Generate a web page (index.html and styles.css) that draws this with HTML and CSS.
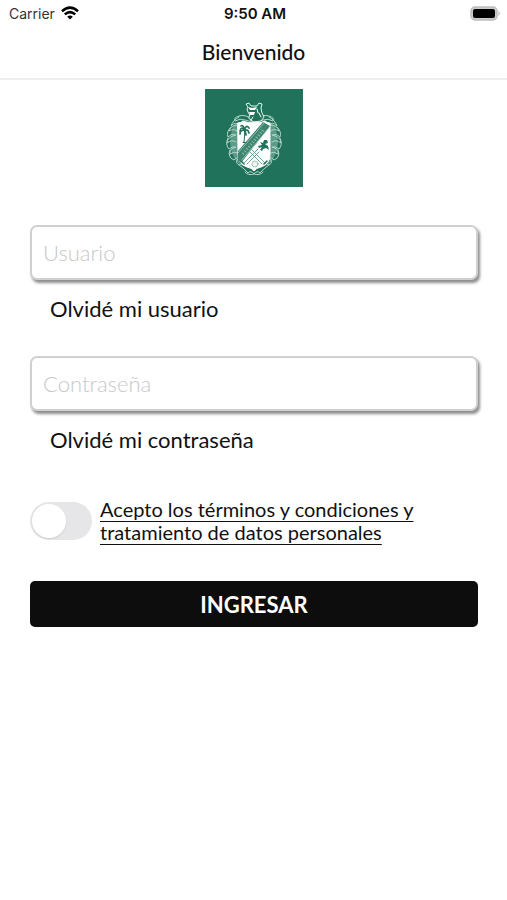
FILE: index.html
```html
<!DOCTYPE html>
<html lang="es">
<head>
    <meta charset="UTF-8">
    <meta name="viewport" content="width=device-width, initial-scale=1.0">
    <title>Bienvenido</title>
    <link rel="stylesheet" href="styles.css">
</head>
<body>
    <div class="status-bar">
        <div class="status-carrier">
            <span>Carrier</span>
            <svg width="18" height="14" viewBox="0 0 18 14" fill="none" stroke="#000" stroke-width="2.6">
                <path d="M1 5.2Q9-2 17 5.2"/>
                <path d="M3.8 8.4Q9 3.8 14.2 8.4"/>
                <path d="M6.2 10.7Q9 8.3 11.8 10.7L9 13.6Z" fill="#000" stroke="none"/>
            </svg>
        </div>
        <div class="status-time">9:50 AM</div>
        <div class="status-battery">
            <svg width="31" height="15" viewBox="0 0 31 15">
                <rect x="1" y="1" width="26" height="13" rx="4" fill="#ccc" stroke="#bdbdbd" stroke-width="1.5"/>
                <rect x="3" y="3" width="22" height="9" rx="2" fill="#000"/>
                <path d="M28.5 5Q31 7.5 28.5 10Z" fill="#b0b0b0"/>
            </svg>
        </div>
    </div>

    <header>
        <h1>Bienvenido</h1>
    </header>

    <main>
        <svg class="logo" width="98" height="98" viewBox="0 0 98 98" fill="none" stroke="#b5d3c8" stroke-linecap="round" stroke-linejoin="round">
            <rect width="98" height="98" fill="#20735a" stroke="none"/>
            <!-- Mantle scrolls -->
            <g stroke-width="1">
                <path d="M33 33L28 37L26 45L25 54L27 64L31 72L37 77L33 71Z" fill="#5a9c87" stroke="none"/>
                <path d="M47 30Q40 25 34 27T30 32Q35 29 40 31T47 32"/>
                <path d="M34 28Q28 31 26 37Q31 32 33 36Q26 36 24 42Q29 39 32 42"/>
                <path d="M26 38Q21 43 23 48Q26 44 31 46Q22 48 22 54Q27 50 31 53"/>
                <path d="M23 49Q20 56 24 60Q27 57 31 58Q24 60 25 65Q29 62 33 64"/>
                <path d="M25 61Q22 68 29 71Q31 68 34 69Q29 73 34 76Q37 74 38 76"/>
                <path d="M34 76Q40 80 43 84Q46 81 49 85Q43 87 40 83"/>
            </g>
            <g stroke-width="1" transform="matrix(-1 0 0 1 98 0)">
                <path d="M33 33L28 37L26 45L25 54L27 64L31 72L37 77L33 71Z" fill="#5a9c87" stroke="none"/>
                <path d="M47 30Q40 25 34 27T30 32Q35 29 40 31T47 32"/>
                <path d="M34 28Q28 31 26 37Q31 32 33 36Q26 36 24 42Q29 39 32 42"/>
                <path d="M26 38Q21 43 23 48Q26 44 31 46Q22 48 22 54Q27 50 31 53"/>
                <path d="M23 49Q20 56 24 60Q27 57 31 58Q24 60 25 65Q29 62 33 64"/>
                <path d="M25 61Q22 68 29 71Q31 68 34 69Q29 73 34 76Q37 74 38 76"/>
                <path d="M34 76Q40 80 43 84Q46 81 49 85Q43 87 40 83"/>
            </g>
            <!-- Bear head -->
            <path d="M44 29Q46 26 43 23Q41 20 43 18L41 15L44 14L46 17L52 17L54 14L57 15L56 19Q56 23 59 28L56 32L49 33Z" fill="#20735a" stroke="#fff" stroke-width=".9"/>
            <path d="M43 18L47 19L52 18L50 21L45 21ZM44 23L50 23L49 26L45 26Z" fill="#fff" stroke="none"/>
            <path d="M52 20L53 24M54 24L56 28M48 28L46 31" stroke="#fff"/>
            <!-- Shield -->
            <path d="M33 34Q36 34 38 32Q44 35 49 33Q55 35 60 32Q62 34 65 34V66Q65 75 56 78Q51 79 49 82Q47 79 42 78Q33 75 33 66Z" fill="#fff" stroke="#fff"/>
            <path d="M33 62L58 33L65 37L36 74L33 71Z" fill="#3c856f" stroke="none"/>
            <path d="M33 64L59 34M36 72L64 39" stroke-width=".7"/>
            <path d="M38 65L59 40" stroke="#8fbdad" stroke-width="3" stroke-dasharray="1 2" stroke-linecap="butt"/>
            <!-- Palm -->
            <g stroke="#20735a">
                <path d="M39.5 41Q40 47 39 53M38 53.5H41"/>
                <path d="M39.5 41Q36 37 35 42M39.5 41Q35 41 35 45M39.5 41Q41 35 44 39M39.5 41Q43 40 44 44M39.5 41Q38 35 36 37M39.5 41Q41 44 41 46" stroke-width="1.7"/>
            </g>
            <!-- Lion -->
            <path d="M62 51L63 54L60 55L63 57L64 61L61 59L58 60L57 62L55 61L57 58L54 59L53 57L57 56L55 53L58 54L59 51Z" fill="#20735a" stroke="none"/>
            <!-- Clubs and ball -->
            <path d="M39 74L53 60M60 74L47 61M42 75L54 63M57 75L45 63" stroke="#4b907b" stroke-width=".8"/>
            <path d="M36 72L39 75M62 72L59 75" stroke="#20735a" stroke-width="1.5"/>
            <circle cx="50" cy="75" r="3" fill="#eef6f2" stroke="#8ab9a9" stroke-width=".8"/>
        </svg>

        <form class="login-form">
            <div class="field">
                <input type="text" id="usuario" placeholder="Usuario" aria-label="Usuario">
                <a href="#">Olvidé mi usuario</a>
            </div>
            <div class="field">
                <input type="password" id="contrasena" placeholder="Contraseña" aria-label="Contraseña">
                <a href="#">Olvidé mi contraseña</a>
            </div>
            <div class="terms">
                <input type="checkbox" class="switch" id="acepto" aria-labelledby="terminos">
                <a href="#" id="terminos">Acepto los términos y condiciones y tratamiento de datos personales</a>
            </div>
            <button type="submit">INGRESAR</button>
        </form>
    </main>
</body>
</html>
```
FILE: styles.css
```css
* {
    box-sizing: border-box;
}

body {
    font-family: Lato, "Liberation Sans", sans-serif;
    margin: 0;
    background-color: #fff;
    color: #111;
}

.status-bar {
    display: grid;
    grid-template-columns: 1fr auto 1fr;
    align-items: center;
    height: 26px;
    padding: 0 6px 0 9px;
    font-family: Inter, "Liberation Sans", sans-serif;
    font-size: 14px;
}

.status-carrier {
    display: flex;
    align-items: center;
    gap: 6px;
    color: #333;
}

.status-time {
    font-size: 15px;
    font-weight: 600;
}

.status-battery {
    display: flex;
    justify-content: flex-end;
}

header {
    height: 54px;
    border-bottom: 2px solid #eee;
    text-align: center;
}

h1 {
    margin: 0;
    font-size: 21px;
    font-weight: 500;
    line-height: 52px;
}

main {
    padding: 9px 29px 0 30px;
}

.logo {
    display: block;
    margin: 0 auto 38px;
}

.field {
    height: 131px;
}

.field input {
    display: block;
    width: 100%;
    height: 55px;
    padding: 0 11px;
    border: 2px solid #d0d0d0;
    border-radius: 7px;
    background: #fff;
    box-shadow: 2px 3px 3px rgba(0, 0, 0, 0.45);
    font-family: inherit;
    font-size: 22px;
    font-weight: 300;
    color: #111;
}

.field input::placeholder {
    color: #c8c8c8;
    opacity: 1;
}

.field a {
    display: inline-block;
    margin: 15px 0 0 20px;
    font-size: 22px;
    line-height: 28px;
    color: #111;
    text-decoration: none;
}

.terms {
    display: flex;
    align-items: center;
    gap: 8px;
    margin-top: 11px;
}

.terms a {
    max-width: 320px;
    font-size: 20px;
    line-height: 23px;
    color: #111;
    text-decoration-thickness: 1px;
    text-underline-offset: 4px;
}

.switch {
    appearance: none;
    flex-shrink: 0;
    width: 62px;
    height: 38px;
    margin: 0;
    padding: 2px;
    border-radius: 19px;
    background: #e6e6e8;
    cursor: pointer;
}

.switch::before {
    content: "";
    display: block;
    width: 34px;
    height: 34px;
    border-radius: 50%;
    background: #fff;
    box-shadow: 0 1px 2px rgba(0, 0, 0, 0.1);
}

.switch:checked {
    background: #20735a;
}

.switch:checked::before {
    margin-left: 24px;
}

button {
    display: block;
    width: 100%;
    height: 46px;
    margin-top: 37px;
    border: none;
    border-radius: 5px;
    background: #0d0d0d;
    color: #fff;
    font-family: inherit;
    font-size: 22px;
    font-weight: 700;
    cursor: pointer;
}
```
